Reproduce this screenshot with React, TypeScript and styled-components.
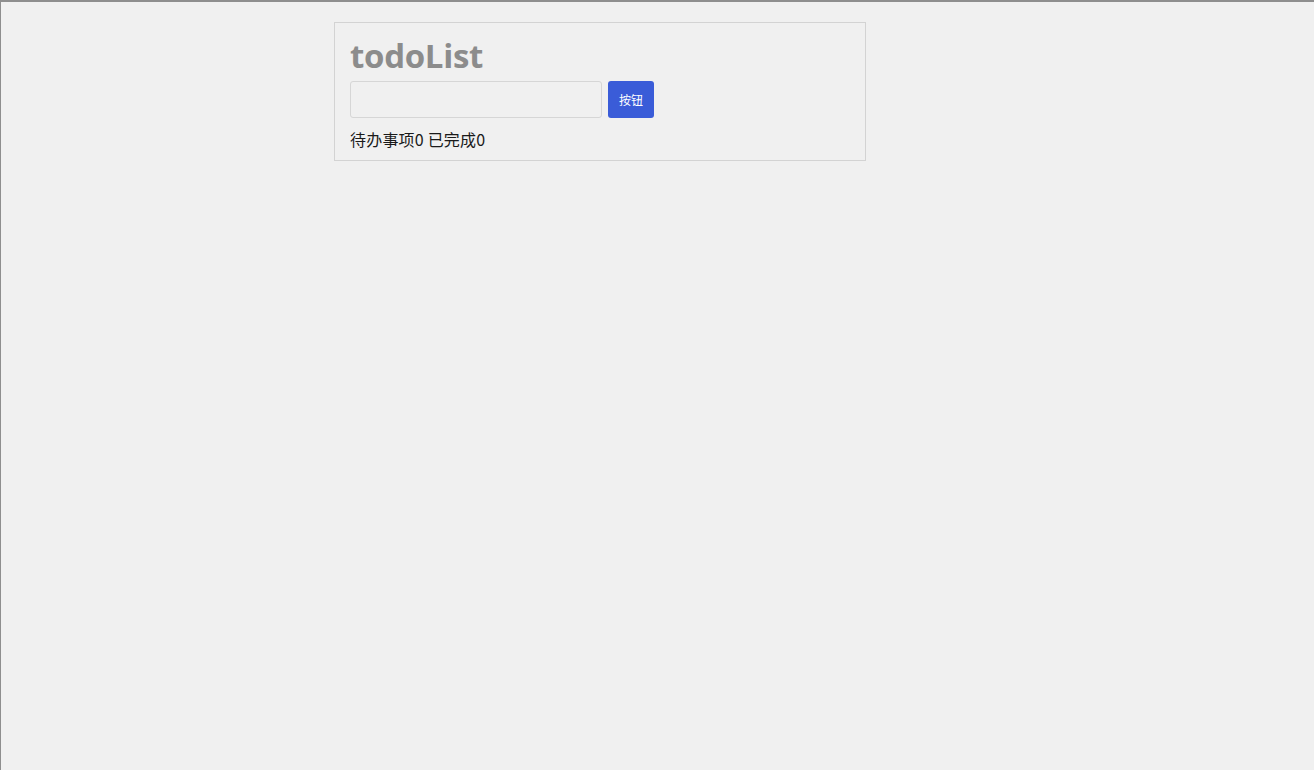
import React, { useState } from "react";
import styled, { createGlobalStyle } from "styled-components";

const Global = createGlobalStyle`
  html, body { margin: 0; padding: 0; }
  body {
    background: #f0f0f0;
    font-family: "Noto Sans", "Noto Sans CJK SC", sans-serif;
    width: 1313px;
    height: 768px;
    border-top: 2px solid #8e8e8e;
    border-left: 1px solid #8e8e8e;
    overflow: hidden;
  }
`;

const Page = styled.div`
  padding-top: 20px;
  padding-left: 333px;
`;

const Card = styled.section`
  width: 500px;
  border: 1px solid #d3d3d3;
  padding: 9px 15px 10px 15px;
  display: flex;
  flex-direction: column;
  box-sizing: content-box;
`;

const Title = styled.h1`
  margin: 0;
  font-family: "Open Sans", "Noto Sans CJK SC", sans-serif;
  font-size: 33px;
  font-weight: 700;
  color: #8c8c8c;
  line-height: 47px;
  letter-spacing: -0.3px;
`;

const Row = styled.div`
  display: flex;
  align-items: center;
  gap: 6px;
  margin-top: 2px;
`;

const Input = styled.input`
  width: 252px;
  height: 37px;
  box-sizing: border-box;
  border: 1px solid #d6d6d6;
  border-radius: 3px;
  background: #f0f0f0;
  outline: none;
  padding: 0 8px;
  font-size: 14px;
`;

const Button = styled.button`
  width: 46px;
  height: 37px;
  box-sizing: border-box;
  border: none;
  border-radius: 3px;
  background: #3a5cd8;
  color: #ffffff;
  font-family: "Noto Sans CJK SC", sans-serif;
  font-size: 12px;
  padding: 0;
  cursor: pointer;
`;

const Stats = styled.p`
  margin: 10px 0 0 0;
  font-family: "Noto Sans CJK SC", sans-serif;
  font-size: 16px;
  line-height: 22px;
  letter-spacing: 0.2px;
  color: #1a1a1a;
`;

export default function App() {
  const [value, setValue] = useState("");
  return (
    <>
      <Global />
      <Page>
        <Card>
          <Title>todoList</Title>
          <Row>
            <Input value={value} onChange={(e) => setValue(e.target.value)} />
            <Button>按钮</Button>
          </Row>
          <Stats>待办事项0 已完成0</Stats>
        </Card>
      </Page>
    </>
  );
}
